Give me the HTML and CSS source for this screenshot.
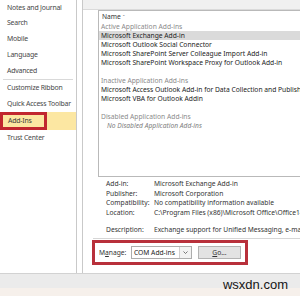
FILE: index.html
```html
<!DOCTYPE html>
<html lang="en">
<head>
  <meta charset="UTF-8" />
  <meta name="viewport" content="width=device-width, initial-scale=1.0"/>
  <title>Outlook Options - Add-Ins</title>
  <link rel="stylesheet" href="styles.css">
</head>
<body>

  <div class="window">
    <div class="main">

      <ul class="nav">
        <li>Notes and Journal</li>
        <li>Search</li>
        <li>Mobile</li>
        <li>Language</li>
        <li>Advanced</li>
        <li class="sep"></li>
        <li>Customize Ribbon</li>
        <li>Quick Access Toolbar</li>
        <li class="active"><span class="mark">Add-Ins</span></li>
        <li>Trust Center</li>
      </ul>

      <div class="spacer"></div>

      <div class="content">
        <div class="topband"></div>

        <div class="addins">
          <div class="list-head">Name <span class="sort">&#710;</span></div>
          <div class="row group">Active Application Add-ins</div>
          <div class="row selected">Microsoft Exchange Add-in</div>
          <div class="row">Microsoft Outlook Social Connector</div>
          <div class="row">Microsoft SharePoint Server Colleague Import Add-in</div>
          <div class="row">Microsoft SharePoint Workspace Proxy for Outlook Add-in</div>
          <div class="row"></div>
          <div class="row group">Inactive Application Add-ins</div>
          <div class="row">Microsoft Access Outlook Add-in for Data Collection and Publishing</div>
          <div class="row">Microsoft VBA for Outlook Addin</div>
          <div class="row"></div>
          <div class="row group">Disabled Application Add-ins</div>
          <div class="row empty">No Disabled Application Add-ins</div>
        </div>

        <div class="details">
          <span>Add-in:</span><span>Microsoft Exchange Add-in</span>
          <span>Publisher:</span><span>Microsoft Corporation</span>
          <span>Compatibility:</span><span>No compatibility information available</span>
          <span>Location:</span><span>C:\Program Files (x86)\Microsoft Office\Office14\ADDINS\UmOutlookAddin.dll</span>
          <span class="desc">Description:</span><span class="desc">Exchange support for Unified Messaging, e-mail with voice</span>
        </div>

        <div class="manage-line"></div>

        <div class="manage">
          <label class="manage-label">M<u>a</u>nage:</label>
          <div class="select">
            <span class="select-text">COM Add-ins</span>
            <span class="select-arrow">
              <svg width="5" height="3" viewBox="0 0 5 3"><polyline points="0.5,0.5 2.5,2.5 4.5,0.5" fill="none" stroke="#555" stroke-width="0.8"/></svg>
            </span>
          </div>
          <button class="go"><u>G</u>o...</button>
        </div>
      </div>

    </div>
    <div class="footer"><span class="watermark">wsxdn.com</span></div>
  </div>

</body>
</html>
```

FILE: styles.css
```css
body {
  margin: 0;
  font-family: "Noto Sans", "Liberation Sans", sans-serif;
  background-color: #ffffff;
  color: #333333;
}

.window {
  width: 300px;
  height: 296px;
  overflow: hidden;
  display: flex;
  flex-direction: column;
}

.main {
  height: 274px;
  display: flex;
  border-bottom: 1px solid #d2d2d2;
  box-sizing: border-box;
}

/* left category list */
.nav {
  width: 77px;
  margin: 0;
  padding: 0;
  list-style: none;
  border-right: 1px solid #c9c9c9;
  box-sizing: border-box;
  font-size: 6.9px;
  letter-spacing: -0.2px;
  color: #474747;
  flex-shrink: 0;
}

.nav li {
  height: 16px;
  line-height: 16px;
  padding-left: 7px;
  white-space: nowrap;
}

.nav li:first-child {
  height: 15px;
  line-height: 15px;
}

.nav li.sep {
  height: 1px;
  margin: 0 3px;
  padding: 0;
  background-color: #d9d9d9;
}

.nav li.active {
  height: 18px;
  padding-left: 0;
  background-color: #fce7a2;
}

.nav .mark {
  display: inline-block;
  width: 47px;
  height: 18px;
  line-height: 12px;
  padding-left: 5px;
  border: 3px solid #c1272f;
  box-sizing: border-box;
  color: #3a3a3a;
}

.spacer {
  width: 6px;
  border-right: 1px solid #c9c9c9;
  box-sizing: border-box;
  flex-shrink: 0;
}

/* right pane */
.content {
  flex: 1;
  overflow: hidden;
  display: flex;
  flex-direction: column;
  font-size: 6.7px;
}

.topband {
  height: 10px;
  background-color: #f0f0f0;
  border-bottom: 1px solid #dadada;
  box-sizing: border-box;
}

.addins {
  margin-left: 15px;
  height: 167px;
  border: 1px solid #b9b9b9;
  border-right: none;
  box-sizing: border-box;
  white-space: nowrap;
  color: #222222;
}

.list-head {
  height: 11px;
  line-height: 11px;
  padding-left: 3px;
  color: #333333;
}

.list-head .sort {
  font-size: 6px;
  color: #888888;
}

.row {
  height: 9px;
  line-height: 9px;
  padding-left: 2px;
}

.row.group {
  color: #8a8a8a;
}

.row.selected {
  background-color: #dadada;
}

.row.empty {
  padding-left: 8px;
  font-style: italic;
  color: #7d7d7d;
}

.details {
  display: grid;
  grid-template-columns: 48px 1fr;
  grid-auto-rows: 9.5px;
  line-height: 9.5px;
  margin: 2px 0 0 23px;
  white-space: nowrap;
  color: #333333;
}

.details .desc {
  margin-top: 8px;
}

.manage-line {
  margin: 11px 0 0 10px;
  border-top: 1px solid #d6d6d6;
}

.manage {
  display: flex;
  align-items: center;
  width: 156px;
  height: 25px;
  margin: 1px 0 0 9px;
  padding-left: 4px;
  border: 3px solid #b8303b;
  box-sizing: border-box;
}

.manage-label {
  width: 32px;
  color: #333333;
}

.select {
  display: flex;
  width: 61px;
  height: 13px;
  border: 1px solid #adadad;
  box-sizing: border-box;
  background-color: #ffffff;
}

.select-text {
  flex: 1;
  line-height: 11px;
  padding-left: 2px;
  color: #222222;
}

.select-arrow {
  width: 11px;
  display: flex;
  align-items: center;
  justify-content: center;
  border-left: 1px solid #d0d0d0;
  background-color: #f2f2f2;
}

.go {
  width: 43px;
  height: 13px;
  margin-left: 6px;
  padding: 0;
  font-family: inherit;
  font-size: 6.7px;
  line-height: 11px;
  color: #333333;
  background-color: #e3e3e3;
  border: 1px solid #b3b3b3;
}

.footer {
  flex: 1;
  display: flex;
  justify-content: flex-end;
  align-items: center;
  padding-right: 12px;
  background: linear-gradient(#ebebeb 0, #ebebeb 14px, #f6f0eb 14px);
}

.watermark {
  font-family: "Liberation Sans", sans-serif;
  font-size: 13px;
  line-height: 22px;
  color: #151515;
}
```
